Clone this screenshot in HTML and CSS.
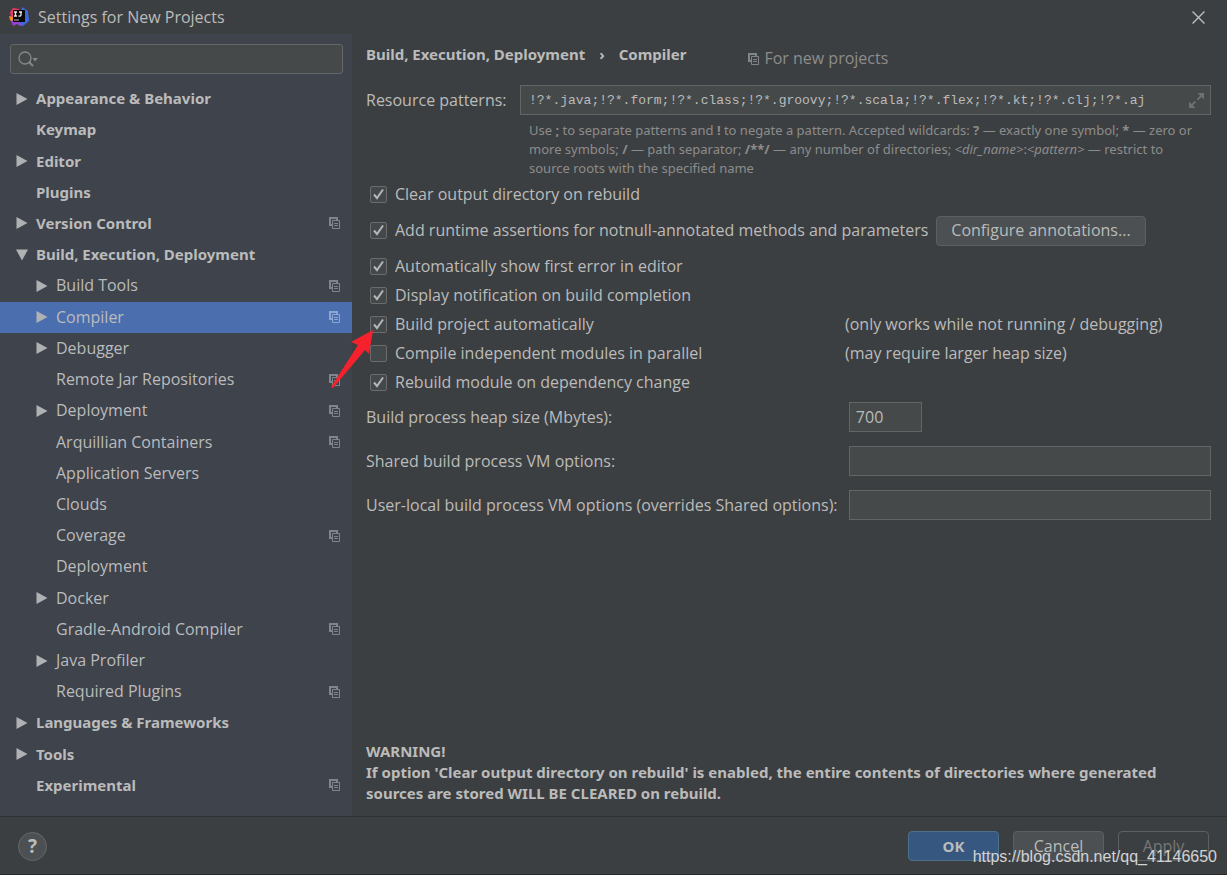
FILE: index.html
```html
<!DOCTYPE html>
<html lang="en">
<head>
<meta charset="utf-8">
<title>Settings for New Projects</title>
<link rel="stylesheet" href="styles.css">
</head>
<body>
<svg class="defs" aria-hidden="true">
  <symbol id="copy" viewBox="0 0 11 12"><path d="M0 0h9v3H7V2H2v5h1v2H0z" fill="currentColor"/><path d="M3.500 3.500h7v8h-7z" fill="none" stroke="currentColor"/><path d="M5 6.500h4M5 8.500h4" stroke="currentColor"/></symbol>
  <symbol id="closed" viewBox="0 0 11 12"><path d="M0 0l11 6-11 6z" fill="currentColor"/></symbol>
  <symbol id="open" viewBox="0 0 12 11"><path d="M0 0h12L6 11z" fill="currentColor"/></symbol>
</svg>
<div class="dialog">
  <header class="titlebar">
    <svg class="logo" viewBox="0 0 20 20" aria-hidden="true">
      <path d="M1 5l3-4 6 1 2 5-7 8-4-2 1-3z" fill="#ef3565"/>
      <path d="M0 9l4 1v5l-3-2z" fill="#f58a2c"/>
      <path d="M13 0l6 4 1 10-6 5-5-1 3-12z" fill="#3d68e0"/>
      <path d="M2 14l3-1 8 4-1 2-4-2-4 2z" fill="#9c3fd0"/>
      <path d="M4 3h12v12H4z" fill="#080808"/>
      <path d="M5 5h3M6.500 5v4M5 9h3M10 5h3M12 5v3q0 1.500-2.500 1" fill="none" stroke="#eee" stroke-width="1.300"/>
      <path d="M5 13h5" stroke="#bbb"/>
    </svg>
    <h1 class="title">Settings for New Projects</h1>
    <button class="close" aria-label="Close"><svg viewBox="0 0 12 12"><path d="M.5.5l11 11M11.500.5l-11 11" stroke="currentColor" stroke-width="1.300"/></svg></button>
  </header>
  <div class="body">
    <nav class="sidebar">
      <div class="search">
        <svg class="search-icon" viewBox="0 0 20 16" aria-hidden="true"><circle cx="7" cy="7" r="6" fill="none" stroke="currentColor" stroke-width="1.300"/><path d="M11 11l4 4" stroke="currentColor" stroke-width="2"/><path d="M14.500 7h5.500l-3 3.500z" fill="currentColor"/></svg>
        <input class="search-input" type="text" aria-label="Search settings">
      </div>
      <ul class="tree">
        <li class="node top"><svg class="arrow"><use href="#closed"/></svg><a href="#">Appearance &amp; Behavior</a></li>
        <li class="node top"><span class="arrow"></span><a href="#">Keymap</a></li>
        <li class="node top"><svg class="arrow"><use href="#closed"/></svg><a href="#">Editor</a></li>
        <li class="node top"><span class="arrow"></span><a href="#">Plugins</a></li>
        <li class="node top"><svg class="arrow"><use href="#closed"/></svg><a href="#">Version Control</a><svg class="copy"><use href="#copy"/></svg></li>
        <li class="node top"><svg class="arrow"><use href="#open"/></svg><a href="#">Build, Execution, Deployment</a></li>
        <li class="node"><svg class="arrow"><use href="#closed"/></svg><a href="#">Build Tools</a><svg class="copy"><use href="#copy"/></svg></li>
        <li class="node selected"><svg class="arrow"><use href="#closed"/></svg><a href="#" aria-current="page">Compiler</a><svg class="copy"><use href="#copy"/></svg></li>
        <li class="node"><svg class="arrow"><use href="#closed"/></svg><a href="#">Debugger</a></li>
        <li class="node"><span class="arrow"></span><a href="#">Remote Jar Repositories</a><svg class="copy"><use href="#copy"/></svg></li>
        <li class="node"><svg class="arrow"><use href="#closed"/></svg><a href="#">Deployment</a><svg class="copy"><use href="#copy"/></svg></li>
        <li class="node"><span class="arrow"></span><a href="#">Arquillian Containers</a><svg class="copy"><use href="#copy"/></svg></li>
        <li class="node"><span class="arrow"></span><a href="#">Application Servers</a></li>
        <li class="node"><span class="arrow"></span><a href="#">Clouds</a></li>
        <li class="node"><span class="arrow"></span><a href="#">Coverage</a><svg class="copy"><use href="#copy"/></svg></li>
        <li class="node"><span class="arrow"></span><a href="#">Deployment</a></li>
        <li class="node"><svg class="arrow"><use href="#closed"/></svg><a href="#">Docker</a></li>
        <li class="node"><span class="arrow"></span><a href="#">Gradle-Android Compiler</a><svg class="copy"><use href="#copy"/></svg></li>
        <li class="node"><svg class="arrow"><use href="#closed"/></svg><a href="#">Java Profiler</a></li>
        <li class="node"><span class="arrow"></span><a href="#">Required Plugins</a><svg class="copy"><use href="#copy"/></svg></li>
        <li class="node top"><svg class="arrow"><use href="#closed"/></svg><a href="#">Languages &amp; Frameworks</a></li>
        <li class="node top"><svg class="arrow"><use href="#closed"/></svg><a href="#">Tools</a></li>
        <li class="node top"><span class="arrow"></span><a href="#">Experimental</a><svg class="copy"><use href="#copy"/></svg></li>
      </ul>
    </nav>
    <main class="main">
      <div class="heading">
        <h2 class="crumbs"><span>Build, Execution, Deployment</span><span>›</span><span>Compiler</span></h2>
        <p class="scope"><svg class="copy"><use href="#copy"/></svg>For new projects</p>
      </div>
      <div class="patterns">
        <label for="patterns">Resource patterns:</label>
        <div class="pattern-box">
          <input class="field mono" id="patterns" type="text" value="!?*.java;!?*.form;!?*.class;!?*.groovy;!?*.scala;!?*.flex;!?*.kt;!?*.clj;!?*.aj">
          <button class="expand" aria-label="Expand"><svg viewBox="0 0 16 16"><path d="M9 0h7v7zM0 9l7 7H0z" fill="currentColor"/><path d="M9 7l4-4M7 9l-4 4" stroke="currentColor" stroke-width="2"/></svg></button>
        </div>
        <p class="hint">Use <b>;</b> to separate patterns and <b>!</b> to negate a pattern. Accepted wildcards: <b>?</b> — exactly one symbol; <b>*</b> — zero or<br>more symbols; <b>/</b> — path separator; <b>/**/</b> — any number of directories; <i>&lt;dir_name&gt;</i>:<i>&lt;pattern&gt;</i> — restrict to<br>source roots with the specified name</p>
      </div>
      <div class="checks">
        <div class="check"><label><input type="checkbox" checked>Clear output directory on rebuild</label></div>
        <div class="check wide"><label><input type="checkbox" checked>Add runtime assertions for notnull-annotated methods and parameters</label><button class="btn annotate">Configure annotations...</button></div>
        <div class="check"><label><input type="checkbox" checked>Automatically show first error in editor</label></div>
        <div class="check"><label><input type="checkbox" checked>Display notification on build completion</label></div>
        <div class="check noted"><label><input type="checkbox" checked>Build project automatically</label><span>(only works while not running / debugging)</span>
          <svg class="pointer" viewBox="0 0 43 58" aria-hidden="true"><path d="M42 0L20 12l7 3L0 57l2 1 32-38 4 4z" fill="#f5222d"/></svg>
        </div>
        <div class="check noted"><label><input type="checkbox">Compile independent modules in parallel</label><span>(may require larger heap size)</span></div>
        <div class="check"><label><input type="checkbox" checked>Rebuild module on dependency change</label></div>
      </div>
      <div class="options">
        <label for="heap">Build process heap size (Mbytes):</label><input class="field heap" id="heap" type="text" value="700">
        <label for="shared">Shared build process VM options:</label><input class="field" id="shared" type="text">
        <label for="local">User-local build process VM options (overrides Shared options):</label><input class="field" id="local" type="text">
      </div>
      <p class="warning">WARNING!<br>If option 'Clear output directory on rebuild' is enabled, the entire contents of directories where generated sources are stored WILL BE CLEARED on rebuild.</p>
    </main>
  </div>
  <footer class="footer">
    <button class="help" aria-label="Help">?</button>
    <div class="actions">
      <button class="btn primary">OK</button>
      <button class="btn">Cancel</button>
      <button class="btn off" disabled>Apply</button>
    </div>
    <span class="watermark">https://blog.csdn.net/qq_41146650</span>
  </footer>
</div>
</body>
</html>
```
FILE: styles.css
```css
* { box-sizing: border-box; }
body {
  margin: 0;
  background: #3c3f41;
  color: #bbb;
  font: 16px/21px "Open Sans", "Noto Sans", sans-serif;
}
h1, h2, p, ul { margin: 0; padding: 0; font-size: inherit; }
button, input { font: inherit; color: inherit; margin: 0; }
button { padding: 0; border: 0; background: none; }
svg { display: block; }
.defs { display: none; }

.dialog {
  display: flex;
  flex-direction: column;
  min-height: 100vh;
  border-bottom: 1px solid #2b2b2b;
}

.titlebar {
  display: flex;
  align-items: center;
  gap: 9px;
  height: 34px;
  padding: 0 22px 0 9px;
}
.logo { width: 20px; height: 20px; }
.title { flex: 1; font-weight: 400; }
.close svg { width: 13px; height: 13px; }

.body { display: flex; flex: 1; }

.sidebar {
  display: flex;
  flex-direction: column;
  width: 352px;
  padding: 10px 0 15px;
  background: #3e434c;
}
.search { position: relative; margin: 0 9px 9px 10px; }
.search-input {
  display: block;
  width: 100%;
  height: 30px;
  padding: 0 8px 0 32px;
  border: 1px solid #646669;
  border-radius: 3px;
  background: #45494a;
}
.search-icon {
  position: absolute;
  left: 8px;
  top: 7px;
  width: 20px;
  height: 16px;
  color: #84888a;
}
.tree { display: flex; flex: 1; flex-direction: column; list-style: none; }
.node {
  display: flex;
  flex: 1;
  align-items: center;
  gap: 8px;
  min-height: 31px;
  padding: 0 12px 0 36px;
}
.node a { flex: 1; color: inherit; text-decoration: none; }
.top, .crumbs, .warning, .primary { font: 700 15px/21px "Noto Sans", "Open Sans", sans-serif; }
.top { padding-left: 16px; }
.selected { background: #4b6eaf; }
.arrow { width: 12px; height: 12px; color: #afb1b3; }
.copy { width: 11px; height: 12px; color: #7f868b; }
.selected .copy { color: #8ba6d2; }

.main {
  display: flex;
  flex: 1;
  flex-direction: column;
  padding: 10px 16px 12px 14px;
}
.heading { display: flex; gap: 62px; height: 41px; }
.crumbs { display: flex; gap: 14px; }
.scope {
  display: flex;
  align-items: center;
  gap: 5px;
  height: 29px;
  color: #8c8c8c;
}

.patterns { display: grid; grid-template-columns: 154px 1fr; align-items: center; }
.pattern-box { position: relative; }
.field {
  display: block;
  width: 100%;
  height: 30px;
  padding: 0 6px;
  border: 1px solid #646464;
  border-radius: 0;
  background: #45494a;
}
.mono { padding: 0 32px 0 8px; font: 13px "Liberation Mono", monospace; }
.expand { position: absolute; right: 7px; top: 8px; color: #6e7173; }
.expand svg { width: 15px; height: 15px; }
.hint {
  grid-column: 2;
  padding: 6px 0 2px 9px;
  color: #8c8c8c;
  font: 13px/19px "Noto Sans", "Open Sans", sans-serif;
  white-space: nowrap;
}

.check { position: relative; display: flex; align-items: center; height: 29px; }
.check label { display: flex; align-items: center; gap: 8px; padding-left: 4px; }
.wide { gap: 8px; height: 43px; }
.noted { display: grid; grid-template-columns: 479fr 366fr; }
.check input {
  appearance: none;
  width: 17px;
  height: 17px;
  border: 1px solid #6b6b6b;
  border-radius: 2px;
  background: #43494a;
}
.check input:checked {
  background: #43494a url("data:image/svg+xml,%3Csvg xmlns='http://www.w3.org/2000/svg' viewBox='0 0 15 15'%3E%3Cpath d='M3 7.500l3 3.500 6-8.500' fill='none' stroke='%23b4b6b8' stroke-width='2'/%3E%3C/svg%3E") center / 15px no-repeat;
}
.pointer { position: absolute; left: -35px; top: 20px; width: 43px; height: 58px; }

.options {
  display: grid;
  grid-template-columns: 4fr 3fr;
  gap: 14px 0;
  align-items: center;
  padding-top: 5px;
}
.options .heap { width: 73px; }
.warning { margin-top: auto; }

.btn {
  min-width: 91px;
  height: 30px;
  border: 1px solid #5e6060;
  border-radius: 4px;
  background: #4c5052;
}
.annotate { padding: 0 14px; }
.primary { border-color: #4c708c; background: #365880; }
.off { background: transparent; color: #777; }

.footer {
  position: relative;
  display: flex;
  align-items: center;
  justify-content: space-between;
  height: 58px;
  padding: 1px 18px 0;
  border-top: 1px solid #2f3233;
}
.help {
  width: 29px;
  height: 29px;
  border: 1px solid #64686a;
  border-radius: 50%;
  background: #4c5052;
  font-size: 19px;
  font-weight: 700;
}
.actions { display: flex; gap: 14px; }
.watermark {
  position: absolute;
  right: 10px;
  bottom: 7px;
  color: #d2d3d4;
  font: 16px/21px "Liberation Sans", sans-serif;
}
```
